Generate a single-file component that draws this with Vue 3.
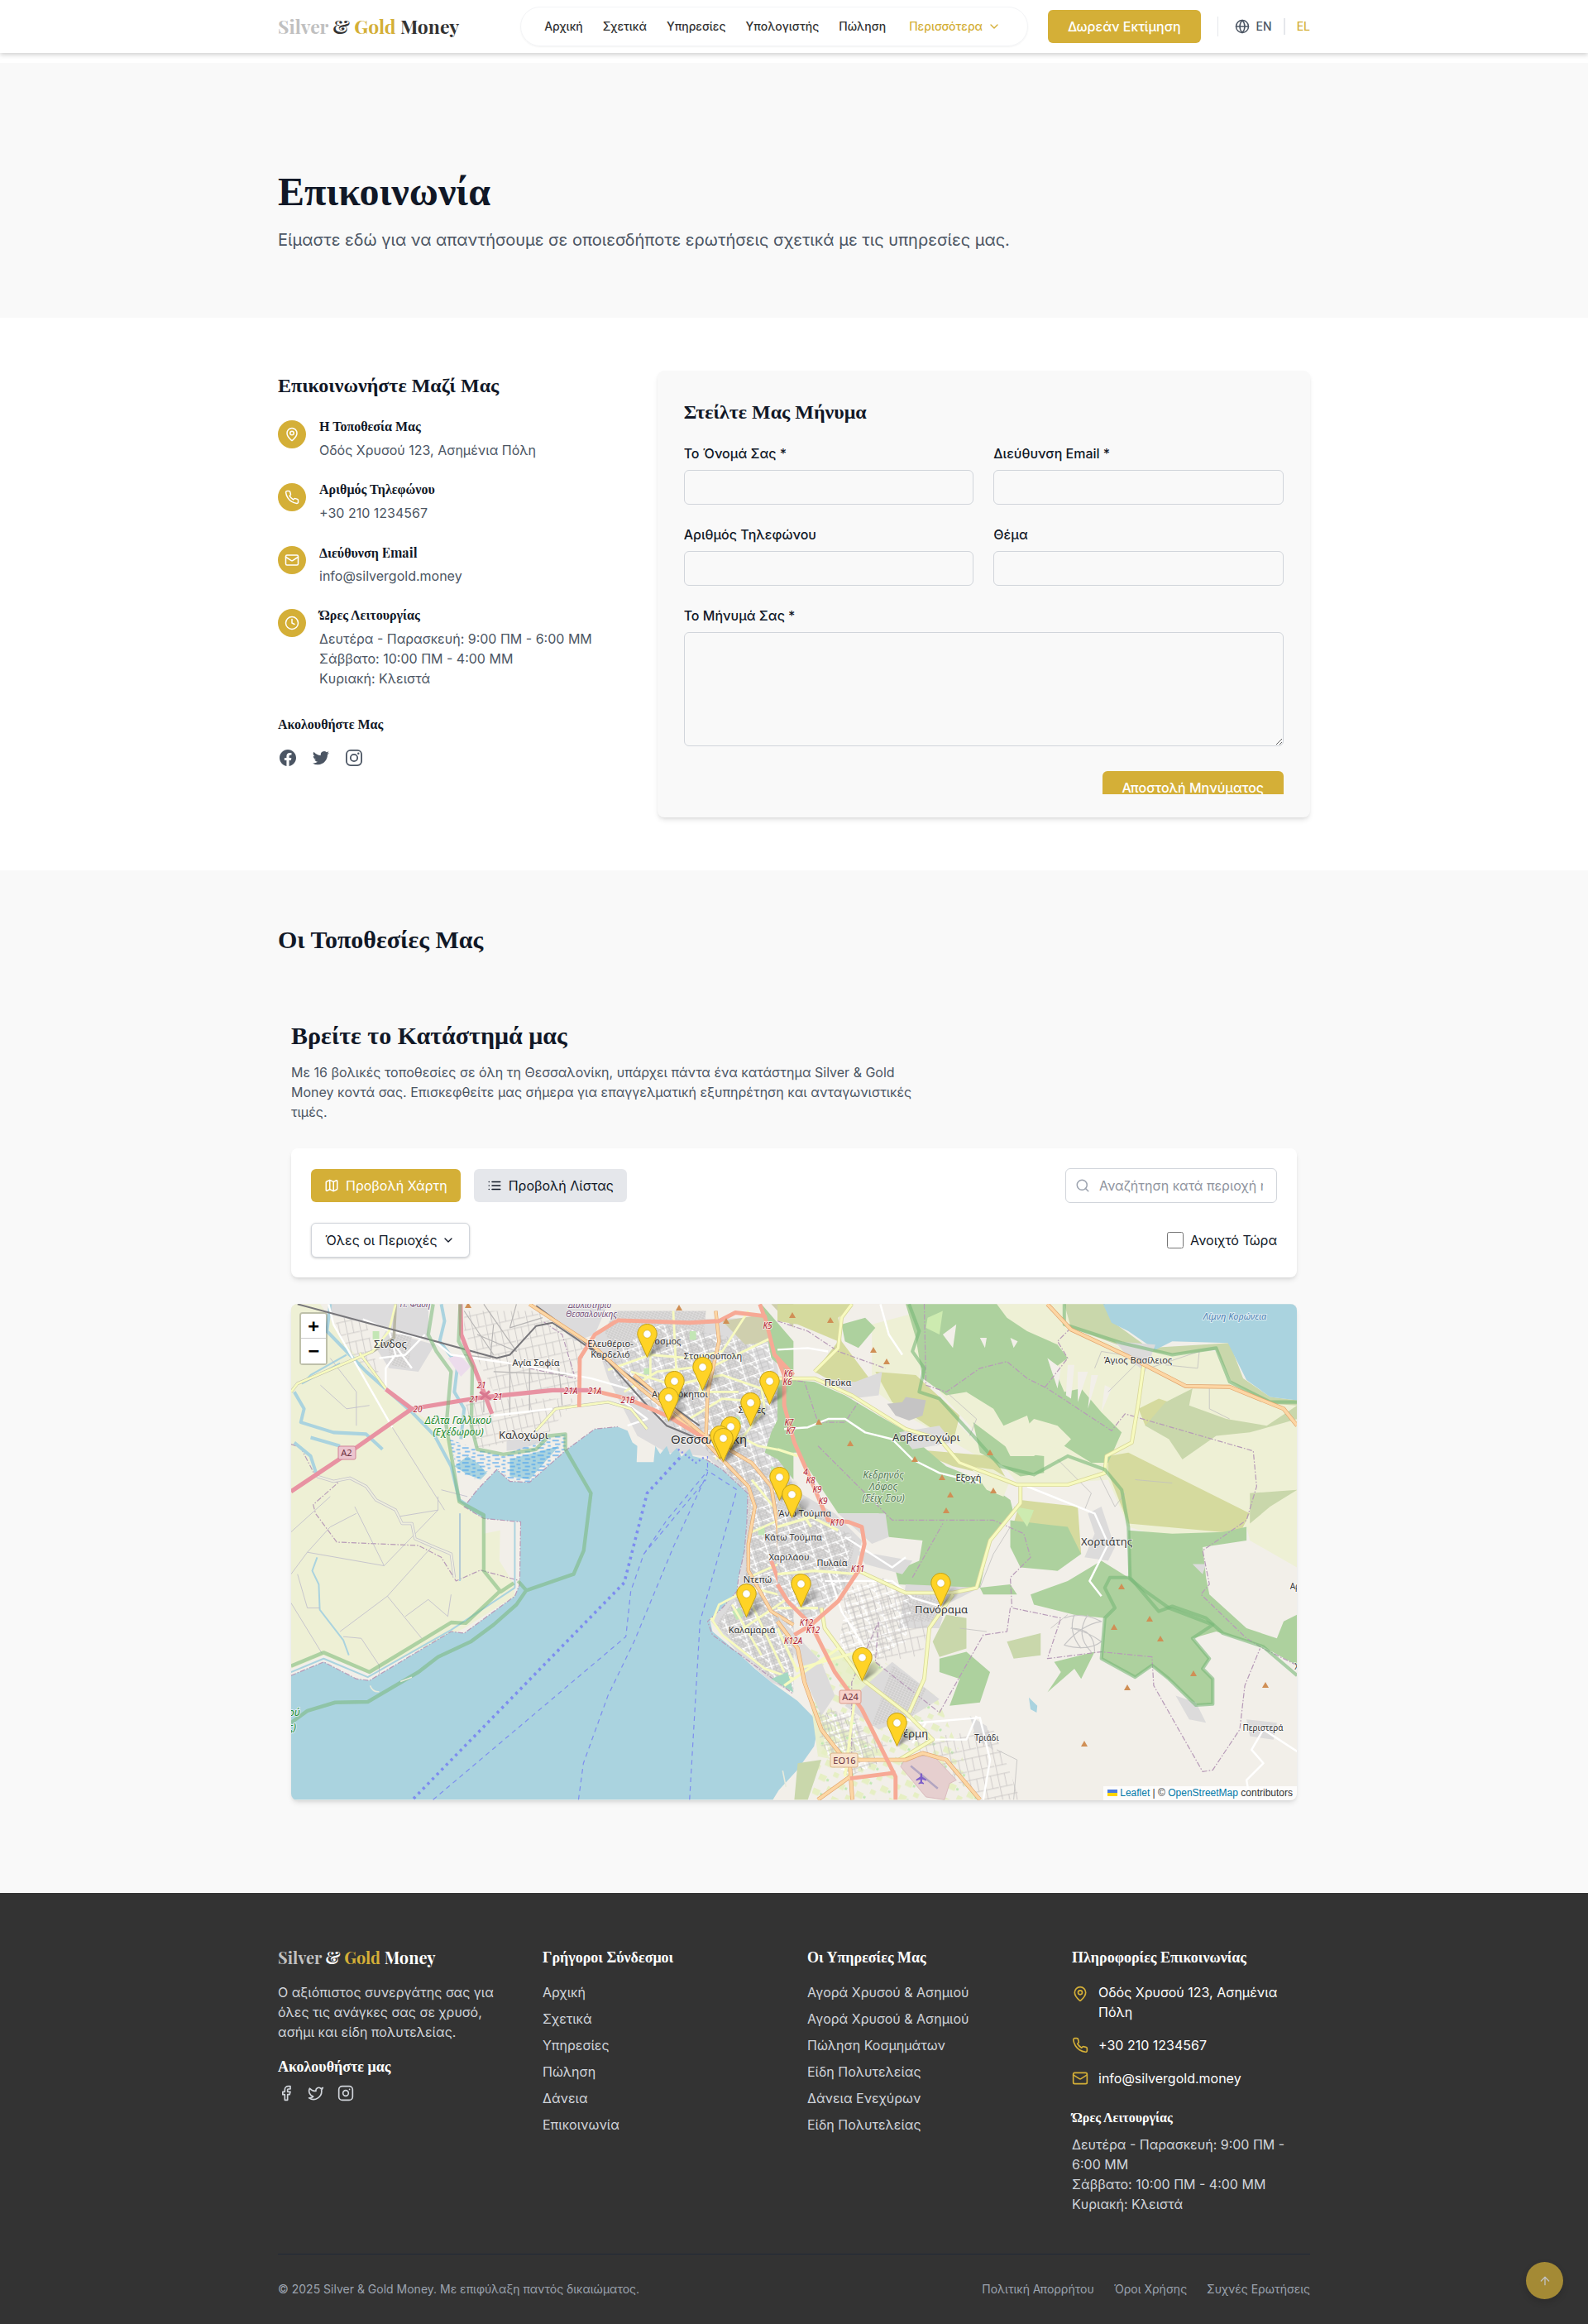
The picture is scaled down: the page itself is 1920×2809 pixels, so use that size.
<script setup>
import { h, ref } from 'vue'

const paths = {
  chevron: ['m6 9 6 6 6-6'],
  globe: ['M2 12a10 10 0 1 0 20 0a10 10 0 1 0-20 0', 'M12 2a14.5 14.5 0 0 0 0 20 14.5 14.5 0 0 0 0-20', 'M2 12h20'],
  pin: ['M20 10c0 5-5.5 10.200-7.400 11.800a1 1 0 0 1-1.200 0C9.500 20.200 4 15 4 10a8 8 0 0 1 16 0', 'M9 10a3 3 0 1 0 6 0a3 3 0 1 0-6 0'],
  phone: ['M22 16.920v3a2 2 0 0 1-2.180 2 19.790 19.790 0 0 1-8.630-3.070 19.500 19.500 0 0 1-6-6 19.790 19.790 0 0 1-3.070-8.670A2 2 0 0 1 4.110 2h3a2 2 0 0 1 2 1.720c.127.960.361 1.903.700 2.810a2 2 0 0 1-.450 2.110L8.090 9.910a16 16 0 0 0 6 6l1.270-1.270a2 2 0 0 1 2.110-.450c.907.339 1.850.573 2.810.700A2 2 0 0 1 22 16.920z'],
  mail: ['M4 4h16a2 2 0 0 1 2 2v12a2 2 0 0 1-2 2H4a2 2 0 0 1-2-2V6a2 2 0 0 1 2-2z', 'm22 7-8.970 5.700a1.940 1.940 0 0 1-2.060 0L2 7'],
  clock: ['M2 12a10 10 0 1 0 20 0a10 10 0 1 0-20 0', 'M12 6v6l4 2'],
  map: ['M14.100 5.600a2 2 0 0 0 1.800 0l3.700-1.900A1 1 0 0 1 21 4.600v12.800a1 1 0 0 1-.600.900l-4.500 2.200a2 2 0 0 1-1.800 0l-4.200-2.100a2 2 0 0 0-1.800 0l-3.700 1.900A1 1 0 0 1 3 19.400V6.600a1 1 0 0 1 .600-.900l4.500-2.200a2 2 0 0 1 1.800 0z', 'M15 5.800v15', 'M9 3.200v15'],
  list: ['M8 6h13', 'M8 12h13', 'M8 18h13', 'M3 6h.01', 'M3 12h.01', 'M3 18h.01'],
  search: ['M3 11a8 8 0 1 0 16 0a8 8 0 1 0-16 0', 'm21 21-4.300-4.300'],
  up: ['m5 12 7-7 7 7', 'M12 19V5'],
  facebook: ['M18 2h-3a5 5 0 0 0-5 5v3H7v4h3v8h4v-8h3l1-4h-4V7a1 1 0 0 1 1-1h3z'],
  twitter: ['M22 4s-.700 2.100-2 3.400c1.600 10-9.400 17.300-18 11.600 2.200.100 4.400-.600 6-2C3 15.500.500 9.600 3 5c2.200 2.600 5.600 4.100 9 4-.900-4.200 4-6.600 7-3.800 1.100 0 3-1.200 3-1.200z'],
  instagram: ['M7 2h10a5 5 0 0 1 5 5v10a5 5 0 0 1-5 5H7a5 5 0 0 1-5-5V7a5 5 0 0 1 5-5z', 'M8 12a4 4 0 1 0 8 0a4 4 0 1 0-8 0', 'M17.500 6.500h.01'],
}
const Icon = ({ name, size = 20 }) =>
  h('svg', {
    width: size, height: size, viewBox: '0 0 24 24', fill: 'none', stroke: 'currentColor',
    'stroke-width': 2, 'stroke-linecap': 'round', 'stroke-linejoin': 'round', 'aria-hidden': 'true',
  }, paths[name].map((d) => h('path', { d })))
Icon.props = ['name', 'size']

const nav = ['Αρχική', 'Σχετικά', 'Υπηρεσίες', 'Υπολογιστής', 'Πώληση']
const hours = ['Δευτέρα - Παρασκευή: 9:00 ΠΜ - 6:00 ΜΜ', 'Σάββατο: 10:00 ΠΜ - 4:00 ΜΜ', 'Κυριακή: Κλειστά']
const contacts = [
  { icon: 'pin', title: 'Η Τοποθεσία Μας', lines: ['Οδός Χρυσού 123, Ασημένια Πόλη'] },
  { icon: 'phone', title: 'Αριθμός Τηλεφώνου', lines: ['+30 210 1234567'] },
  { icon: 'mail', title: 'Διεύθυνση', latin: 'Email', lines: ['info@silvergold.money'] },
  { icon: 'clock', title: 'Ώρες Λειτουργίας', lines: hours },
]
const fields = [
  { id: 'name', label: 'Το Όνομά Σας *', type: 'text' },
  { id: 'email', label: 'Διεύθυνση Email *', type: 'email' },
  { id: 'phone', label: 'Αριθμός Τηλεφώνου', type: 'tel' },
  { id: 'subject', label: 'Θέμα', type: 'text' },
]
const quickLinks = ['Αρχική', 'Σχετικά', 'Υπηρεσίες', 'Πώληση', 'Δάνεια', 'Επικοινωνία']
const services = ['Αγορά Χρυσού & Ασημιού', 'Αγορά Χρυσού & Ασημιού', 'Πώληση Κοσμημάτων', 'Είδη Πολυτελείας', 'Δάνεια Ενεχύρων', 'Είδη Πολυτελείας']
const legal = ['Πολιτική Απορρήτου', 'Όροι Χρήσης', 'Συχνές Ερωτήσεις']
const openNow = ref(false)

/* Marker tips on the 1216 x 600 map canvas */
const markers = [
  [430, 65], [497, 105], [463, 122], [578, 122], [456, 142], [555, 148], [531, 177], [518, 188],
  [522, 191], [590, 238], [605, 259], [785, 366], [616, 367], [550, 379], [690, 456], [732, 535],
]
const places = [
  [120, 53, 13, 'Σίνδος'], [296, 75, 11, 'Αγία Σοφία'], [281, 163, 13, 'Καλοχώρι'],
  [386, 52, 11, 'Ελευθέριο-'], [386, 65, 11, 'Κορδελιό'], [449, 49, 11, 'Εύοσμος'],
  [510, 67, 11, 'Σταυρούπολη'], [470, 113, 11, 'Αμπελόκηποι'], [557, 132, 11, 'Συκιές'],
  [505, 169, 15, 'Θεσσαλονίκη'], [661, 99, 11, 'Πεύκα'], [768, 166, 13, 'Ασβεστοχώρι'],
  [819, 214, 11, 'Εξοχή'], [1024, 72, 11, 'Άγιος Βασίλειος'], [986, 292, 13, 'Χορτιάτης'],
  [621, 257, 11, 'Άνω Τούμπα'], [607, 286, 11, 'Κάτω Τούμπα'], [602, 310, 11, 'Χαριλάου'],
  [654, 317, 11, 'Πυλαία'], [564, 337, 11, 'Ντεπώ'], [557, 398, 11, 'Καλαμαριά'],
  [786, 374, 13, 'Πανόραμα'], [750, 524, 13, 'Θέρμη'], [841, 528, 10, 'Τριάδι'],
  [1175, 516, 10, 'Περιστερά'], [1230, 345, 10, 'Αρδαμέρι'], [1242, 442, 10, 'Χολομώντας'],
]
const roadRefs = [
  [230, 102, '21'], [221, 119, '21'], [250, 116, '21'], [153, 131, '20'], [338, 109, '21A'], [367, 109, '21A'],
  [407, 120, '21B'], [576, 30, 'K5'], [601, 88, 'K6'], [600, 98, 'K6'], [602, 147, 'K7'], [604, 157, 'K7'],
  [622, 207, '4'], [628, 217, 'K8'], [636, 228, 'K9'], [643, 242, 'K9'], [660, 268, 'K10'], [685, 324, 'K11'],
  [623, 389, 'K12'], [631, 398, 'K12'], [607, 411, 'K12A'],
]
const peaks = [
  [214, 2], [469, 5], [526, 21], [606, 14], [652, 20], [704, 56], [720, 70], [638, 143], [676, 169], [754, 188],
  [845, 180], [787, 210], [797, 231], [849, 226], [792, 250], [1004, 342], [1038, 381], [995, 391],
  [1051, 405], [1091, 447], [1011, 464], [1178, 461], [959, 532], [603, 146],
]
</script>

<template>
  <div class="page">
    <header class="topbar">
      <div class="container bar">
        <a class="logo" href="#"><span class="silver">Silver</span> &amp; <span class="gold">Gold</span> Money</a>
        <div class="bar-right">
          <nav class="pill">
            <a v-for="n in nav" :key="n" href="#">{{ n }}</a>
            <button type="button" class="more">Περισσότερα <Icon name="chevron" :size="16" /></button>
          </nav>
          <a class="btn primary cta" href="#">Δωρεάν Εκτίμηση</a>
          <div class="langs">
            <Icon name="globe" :size="18" />
            <button type="button">EN</button>
            <span class="sep"></span>
            <button type="button" class="gold">EL</button>
          </div>
        </div>
      </div>
    </header>

    <section class="hero">
      <div class="container">
        <h1>Επικοινωνία</h1>
        <p>Είμαστε εδώ για να απαντήσουμε σε οποιεσδήποτε ερωτήσεις σχετικά με τις υπηρεσίες μας.</p>
      </div>
    </section>

    <section class="container contact">
      <div>
        <h2>Επικοινωνήστε Μαζί Μας</h2>
        <ul class="details">
          <li v-for="c in contacts" :key="c.title">
            <span class="disc"><Icon :name="c.icon" :size="18" /></span>
            <div>
              <h3>{{ c.title }} <span v-if="c.latin" class="latin">{{ c.latin }}</span></h3>
              <p v-for="l in c.lines" :key="l">{{ l }}</p>
            </div>
          </li>
        </ul>
        <h3>Ακολουθήστε Μας</h3>
        <div class="social">
          <a href="#" aria-label="Facebook"><svg width="24" height="24" viewBox="0 0 24 24" fill="currentColor"><path d="M22 12c0-5.523-4.477-10-10-10S2 6.477 2 12c0 4.991 3.657 9.128 8.438 9.878v-6.987h-2.540V12h2.540V9.797c0-2.506 1.492-3.890 3.777-3.890 1.094 0 2.238.195 2.238.195v2.460h-1.260c-1.243 0-1.630.771-1.630 1.562V12h2.773l-.443 2.890h-2.330v6.988C18.343 21.128 22 16.991 22 12z" /></svg></a>
          <a href="#" aria-label="Twitter"><svg width="24" height="24" viewBox="0 0 24 24" fill="currentColor"><path d="M8.290 20.251c7.547 0 11.675-6.253 11.675-11.675 0-.178 0-.355-.012-.530A8.348 8.348 0 0022 5.920a8.190 8.190 0 01-2.357.646 4.118 4.118 0 001.804-2.270 8.224 8.224 0 01-2.605.996 4.107 4.107 0 00-6.993 3.743 11.650 11.650 0 01-8.457-4.287 4.106 4.106 0 001.270 5.477A4.072 4.072 0 012.800 9.713v.052a4.105 4.105 0 003.292 4.022 4.095 4.095 0 01-1.853.070 4.108 4.108 0 003.834 2.850A8.233 8.233 0 012 18.407a11.616 11.616 0 006.290 1.840" /></svg></a>
          <a href="#" aria-label="Instagram"><svg width="24" height="24" viewBox="0 0 24 24" fill="none" stroke="currentColor" stroke-width="1.800"><rect x="2.900" y="2.900" width="18.200" height="18.200" rx="5" /><circle cx="12" cy="12" r="4.200" /><circle cx="17.300" cy="6.700" r="1.200" fill="currentColor" stroke="none" /></svg></a>
        </div>
      </div>

      <div class="card">
        <form class="form" @submit.prevent>
          <h2>Στείλτε Μας Μήνυμα</h2>
          <div class="fields">
            <div v-for="f in fields" :key="f.id" class="field">
              <label :for="f.id">{{ f.label }}</label>
              <input :id="f.id" :type="f.type">
            </div>
            <div class="field wide">
              <label for="message">Το Μήνυμά Σας *</label>
              <textarea id="message"></textarea>
            </div>
          </div>
          <div class="submit"><button class="btn primary" type="submit">Αποστολή Μηνύματος</button></div>
        </form>
      </div>
    </section>

    <section class="locations">
      <div class="container">
        <h2 class="big">Οι Τοποθεσίες Μας</h2>
        <div class="finder">
          <h2 class="big">Βρείτε το Κατάστημά μας</h2>
          <p class="lead">Με 16 βολικές τοποθεσίες σε όλη τη Θεσσαλονίκη, υπάρχει πάντα ένα κατάστημα Silver &amp; Gold Money κοντά σας. Επισκεφθείτε μας σήμερα για επαγγελματική εξυπηρέτηση και ανταγωνιστικές τιμές.</p>

          <div class="panel">
            <div class="row">
              <div class="views">
                <button type="button" class="view active"><Icon name="map" :size="18" />Προβολή Χάρτη</button>
                <button type="button" class="view"><Icon name="list" :size="18" />Προβολή Λίστας</button>
              </div>
              <div class="search">
                <Icon name="search" :size="18" />
                <input type="text" aria-label="Αναζήτηση" placeholder="Αναζήτηση κατά περιοχή ή διεύθυνση...">
              </div>
            </div>
            <div class="row">
              <div class="region">
                <select aria-label="Περιοχή"><option>Όλες οι Περιοχές</option></select>
                <Icon name="chevron" :size="16" />
              </div>
              <label class="open"><input v-model="openNow" type="checkbox">Ανοιχτό Τώρα</label>
            </div>
          </div>

          <div class="map">
            <svg class="tiles" viewBox="0 0 1216 600" preserveAspectRatio="xMidYMid slice" aria-label="Χάρτης Θεσσαλονίκης">
              <defs>
                <pattern id="streets" width="9" height="7" patternUnits="userSpaceOnUse" patternTransform="rotate(24)">
                  <rect width="9" height="7" fill="#cfcecd" />
                  <path d="M0 0H9M0 0V7" stroke="#e9e8e8" stroke-width="2" />
                </pattern>
                <pattern id="streets2" width="47" height="38" patternUnits="userSpaceOnUse" patternTransform="rotate(-18)">
                  <path d="M0 1H47M2 0V38M28 1L47 26" fill="none" stroke="#fff" stroke-width="4" />
                  <path d="M0 12H47M14 0V38M0 26H30M34 10V38" fill="none" stroke="#bfbebd" stroke-width="2" />
                </pattern>
                <pattern id="lanes" width="42" height="64" patternUnits="userSpaceOnUse" patternTransform="rotate(-12)">
                  <path d="M0 2H42M4 0V64M24 2V40M4 40H42" fill="none" stroke="#c6c3c2" stroke-width="2" />
                </pattern>
                <pattern id="fields" width="60" height="46" patternUnits="userSpaceOnUse" patternTransform="rotate(25)">
                  <path d="M0 0h22v18H0zM36 24h16v14H36z" fill="#e6efc4" />
                  <path d="M24 6h7v7h-7z" fill="#bfe8b0" />
                </pattern>
                <pattern id="marsh" width="46" height="22" patternUnits="userSpaceOnUse">
                  <path d="M2 4h20M30 9h12M10 15h16M34 20h9" stroke="#4aa3ef" stroke-width="3" />
                </pattern>
              </defs>
              <rect width="1216" height="600" fill="#f2efe9" />

              <g transform="translate(-12 -16) scale(.395 .408)" fill="none" stroke-linejoin="round">
                <path fill="#eef0d5" d="M30 40H120L200 160L330 300L400 350L470 400L515 430L530 560L560 640L620 675L620 720L670 710L668 800L700 850L712 870L715 905L560 1000L270 1135L130 1080L30 1120z" />
                <path fill="url(#lanes)" d="M560 60H880L930 160L910 290L650 300L560 120zM560 320L900 320L820 420L600 470zM150 50L260 90L300 250L200 190z" />
                <path fill="#dcdbdc" d="M145 40H450L452 150L350 120L150 70zM320 120L470 160L420 240L330 230L290 170zM690 445L800 430L790 465L690 475zM780 40H1000L960 130L900 150L830 90zM960 140L1010 90L1470 80L1520 230L1540 420L1568 600L1568 1190L1500 1160L1400 1075L1315 980L1400 880L1425 690L1428 600L1300 490L1180 480L1090 430L1000 260z" />
                <path fill="url(#streets)" d="M990 120L1020 60L1300 60L1290 180L1150 200L1020 190zM1180 130L1420 150L1500 320L1450 420L1340 420L1240 330L1180 240zM1310 480L1420 440L1568 640V1180L1500 1150L1330 990L1420 870L1430 600zM330 130L400 130L390 230L330 220z" />
                <path fill="url(#streets2)" d="M980 200L1160 100L1500 160L1530 430L1568 600V1180L1480 1130L1340 990L1420 870L1440 610L1280 450L1080 330z" />
                <path fill="#add19e" d="M1470 40L1568 150V260L1500 200zM1540 250L1568 300V560L1520 500L1480 480L1500 420L1530 360z" />
                <path fill="#cfcfae" d="M1350 90L1480 70L1500 150L1420 160zM1500 40H1568V110z" />
                <path fill="#c3e6b5" d="M1370 380l30 -8 10 24 -28 8zM1200 300l26 4 -6 22 -24 -6zM1110 230l20 0 0 18 -20 0zM1250 120l20 0 0 26 -20 0zM1500 520l30 10 -6 24 -28 -10zM1460 700l20 0 0 24 -20 0zM1380 950l24 -12 12 26 -22 12zM280 120l20 0 0 24 -20 0z" />
                <path fill="#aad3df" d="M30 1140L130 1100L230 1150L270 1155L520 1010L560 1015L715 905L730 870L733 685L620 675L560 640L600 590L660 530L700 565L760 568L875 470L960 410L1030 403L1060 415L1075 450L1090 460L1088 508L1140 508L1145 460L1160 484L1180 460L1190 486L1212 465L1225 492L1250 468L1260 490L1300 500L1350 530L1400 575L1428 600L1425 690L1418 770L1400 850L1395 890L1350 940L1312 975L1320 1010L1400 1075L1450 1120L1500 1160L1580 1215L1646 1280L1631 1350L1580 1420L1523 1480L1505 1508H30z" />
                <path stroke="#b79bb8" stroke-width="3" stroke-dasharray="16 5 4 5" d="M30 1140L130 1100L230 1150L270 1155L520 1010L560 1015L715 905L730 870L733 685L620 675L560 640L600 590L660 530L700 565L760 568L875 470L960 410L1030 403M1300 500L1350 530L1428 600L1425 690L1418 770L1400 850L1395 890L1350 940L1305 980L1320 1020L1400 1075L1568 1195M30 455L60 465L105 550L175 568L98 634L105 660L170 745L420 755L490 790L535 860L610 828L725 858M760 230L900 260L860 130L800 90" />
                <path fill="#f2efe9" d="M515 440L530 530L560 500L600 500L640 540L670 480L600 470L580 440zM670 490L870 425V470L760 565L700 560L650 520z" />
                <path fill="#aad3df" d="M530 520L570 490L600 510L630 540L610 560L570 545zM700 500L850 460L760 560L700 550z" />
                <path fill="url(#marsh)" d="M515 440L600 470L680 488L830 430L875 425V470L760 568L700 560L650 520L600 560L540 540z" />
                <g stroke="#aad3df">
                  <path stroke-width="10" d="M150 40L140 120L260 240L400 360L470 430L520 520L545 620L600 655M490 40L500 90L485 150L540 220L530 300L560 350L550 440M40 300L70 350L60 390L160 420L260 425L310 470M90 435L180 460M40 450L90 490L110 550" />
                  <path stroke-width="5" d="M200 190L90 250L65 275L180 215M110 790L95 830L115 870L118 945L190 1035L207 1080M715 685V880L520 1005L265 1145L130 1090L30 1130M547 660V860" />
                </g>
                <path fill="#ecdcec" d="M510 200L545 190L580 225L550 255z" />
                <g stroke="#bdbacb" stroke-width="2">
                  <path d="M30 715L150 610M30 840L80 775L150 700L230 660M80 775L315 815L225 640M315 815L480 650L355 670M380 965L450 915L510 965L520 900M180 1010L325 905L460 760M80 940L50 840M80 940H118M30 925L125 1075M190 1025L245 1030L300 1110V1135M325 905L430 1030M547 660V855M340 405L500 650M480 610V650M490 590L570 610M150 200L230 300L230 400M120 280L200 350L270 340" />
                  <path stroke="#b7b5b4" stroke-width="3" d="M560 60L650 190M620 40L720 180L600 130M720 40L700 110L800 80M650 100L640 200L560 190M760 210V360M700 210V370M650 240L900 250M620 300V360M850 230L860 340" />
                </g>
                <path stroke="#c5c4ca" stroke-width="9" d="M110 550L160 565L210 555L260 580L290 620L350 650L370 690L400 690L410 735L470 760L520 780L530 850" />
                <path stroke="#eeeedd" stroke-width="5" d="M110 550L160 565L210 555L260 580L290 620L350 650L370 690L400 690L410 735L470 760L520 780L530 850" />
                <g stroke="#fff" stroke-width="6">
                  <path d="M145 40L160 100L340 405M330 120L350 190L320 230L320 300M250 85L340 120L470 150M470 150L520 190L700 215L950 260L1060 290M650 370L830 350M300 200L380 190L440 130M1050 330L1120 380L1060 400M350 165L400 230" />
                </g>
                <g stroke="#b9b7a6" stroke-width="9"><path d="M30 300L50 275L280 180L345 140L350 40M240 185L320 290M780 415L840 350L1000 330L1070 350L1120 410" /></g>
                <g stroke="#f7fabf" stroke-width="7">
                  <path d="M30 300L50 275L280 180L330 120L350 40M240 185L320 290M780 415L840 350L1000 330L1070 350L1120 410M1000 235L1130 190L1250 200L1350 180L1430 60M1070 240L1200 280L1350 250L1470 290L1480 350L1400 450M1130 100V250M1200 60L1210 250M1050 300L1150 240L1330 220L1500 140M1250 380L1350 320L1470 330M1330 500L1400 430L1460 460L1568 480M1440 560L1540 680L1568 760M1430 720L1568 660M1430 850L1568 790M1320 980L1340 930L1440 880L1520 900L1568 880M1315 970L1350 1020L1480 1120L1568 1150M1380 930L1470 1080M1430 910L1540 1130M1400 1010L1568 900M1300 200L1280 300L1400 300" />
                </g>
                <g stroke="#77767a" stroke-width="5"><path d="M50 40L340 115L660 200L700 190L780 105L830 95L900 140L1000 210L1120 340L1180 400L1280 440M780 45L900 130L1010 215L1150 310L1280 400" /></g>
                <g stroke="#e0a26a" stroke-width="11"><path d="M760 40L950 160L1100 290L1280 430L1430 580L1450 640L1430 750L1430 830L1500 950L1568 990M1080 250L1290 425L1440 510L1500 580L1520 700L1530 850M1330 60L1340 150L1305 300L1300 440" /></g>
                <g stroke="#fcd6a4" stroke-width="8"><path d="M760 40L950 160L1100 290L1280 430L1430 580L1450 640L1430 750L1430 830L1500 950L1568 990M1080 250L1290 425L1440 510L1500 580L1520 700L1530 850M1330 60L1340 150L1305 300L1300 440" /></g>
                <g stroke="#f7a995" stroke-width="12"><path d="M950 295L1060 320L1180 370L1300 440M912 345L914 200L960 130L1030 88L1250 95L1340 90L1390 65L1480 75L1510 190L1568 250M1465 40L1480 80M1500 800L1530 880L1600 940" /></g>
                <g stroke="#e892a2" stroke-width="13"><path d="M30 595L200 485L400 350L600 318L830 295L950 295M549 40L551 130L620 300L645 365M320 292L400 350" /></g>
                <path stroke="#d87890" stroke-width="8" d="M608 300L642 322M610 322L638 298" />
                <g stroke="#78b878" stroke-opacity=".55" stroke-width="11">
                  <path d="M465 40L450 130L475 180L520 240L505 400L545 625L620 665V830L672 892L712 866M548 40L543 150L585 225L582 400L600 470L680 485L780 470L820 430L870 425V470L948 600L926 770L895 840L750 888L725 860M30 1112L130 1072L270 1130L520 983L565 985L670 890M750 888L720 930L650 990L580 1040L480 1085L420 1130L265 1218L165 1220L80 1245L30 1280" />
                </g>
                <g stroke="#7680f2" stroke-opacity=".85" stroke-width="3" stroke-dasharray="14 12">
                  <path d="M465 1508L1055 1025L1070 890L1110 780L1300 560M910 1508L925 1400L1000 1200L1080 1040L1200 760L1305 540V490M1250 1508L1282 980L1395 590L1300 530M1110 780L1180 680L1300 540" />
                  <path stroke-width="9" stroke-dasharray="8 12" d="M405 1505L1050 865L1120 600L1225 490" />
                  <path stroke-width="6" stroke-dasharray="5 8" d="M1215 470L1270 510L1300 490" />
                </g>
                <path stroke="#e8eadb" stroke-width="4" d="M272 1170Q280 1190 300 1188M365 1158L400 1145M1535 1422L1545 1470" />
                <path fill="#a5d8c3" d="M1500 1150L1550 1130L1568 1190z" />
              </g>

              <g transform="translate(588 -16) scale(.408)" fill="none" stroke-linejoin="round">
                <path fill="#eef0d5" d="M640 40H850L870 110L1020 170L1300 180L1345 270L1540 340V820L1400 740L1390 700L1250 760L1040 700L980 560L720 580L570 400L480 300L640 200zM280 100L430 60L420 280L560 420L680 540L400 380L280 290z" />
                <path fill="#e9efcd" d="M130 1060L280 1090L400 1200L330 1300L200 1180zM100 1230L200 1300L320 1370L220 1400L120 1380z" />
                <path fill="url(#fields)" d="M40 1040L300 1090L470 1200L600 1508H100L130 1300z" />
                <path fill="#d5da9e" d="M0 40H225L180 80L190 150L280 270L200 290L110 240L180 150L60 100L0 90zM290 240L410 250L540 370L520 450L340 330zM980 490L1040 480L1200 560L1400 660L1370 720L1040 690L980 540zM720 620L890 640L900 780L780 760L700 690zM1070 350L1130 320L1190 340L1150 400L1090 400zM400 470L640 490L680 560L520 520z" />
                <path fill="#c9d7ab" d="M850 40H970L990 90L1100 170L1340 155L1380 260L1460 315L1540 325V340L1460 335L1345 270L1300 175L1170 190L1020 165L870 110zM1150 330L1230 290L1220 340L1330 380L1450 400L1540 340V380L1400 420L1300 430L1200 500L1160 440L1090 400zM1400 600L1540 590L1460 640L1400 690zM680 1040L780 1015V1080L700 1090zM460 1040L500 960L560 970L560 1060L480 1085zM60 1400L130 1390L90 1508H50z" />
                <g fill="#add19e">
                  <path d="M380 40H650L680 80L740 120L830 160L860 200L820 230L850 300L900 290L960 360L1000 400L1020 420L980 510L930 510L850 460L760 440L740 370L670 400L640 350L560 300L500 310L430 260L410 140zM0 260L110 270L200 310L300 370L370 410L500 520L620 570L690 620L700 660L630 740L600 880L520 880L360 870L350 830L420 800L430 740L330 730L300 660L180 660L140 600L60 480L0 480zM580 390L700 480L790 490L790 540L720 550L600 480zM190 100L260 80L290 110L240 170L200 150z" />
                  <path d="M690 680L860 700L900 780L830 830L720 820L690 760zM750 900L860 860L960 800L1040 850V710L1170 720L1320 715L1390 700V740L1260 760L1270 850L1280 900L1390 1000L1480 1030L1500 980L1540 960V1110L1430 1050L1300 1010L1230 1030L1280 1090L1260 1120L1290 1150L1290 1225L1240 1228L1170 1160L1110 1110L1060 1145L960 1090L970 970L880 960L760 930zM480 1090L560 1070L630 1130L600 1220L510 1230L540 1150L480 1130zM600 880L690 870L710 900L610 900zM820 1100L940 1070L900 1150L880 1120L800 1190L840 1130z" />
                </g>
                <path fill="#f2efe9" d="M800 200L840 230L830 290zM860 220L880 220L870 320L855 310zM890 240L920 240L890 330zM930 250L950 250L920 350zM970 280L990 290L960 360zM490 130L530 100L520 170zM600 140L620 140L615 170zM690 140L712 150L700 170z" />
                <path fill="#eef0d5" d="M660 430L690 400L730 410L760 380L830 400L870 440L840 470L800 460L760 490L690 490zM570 520L640 530L690 560L670 610L620 590z" />
                <path fill="#cdebb0" d="M445 80L490 60L480 130L440 110zM700 640L760 650L740 700z" />
                <path fill="#aad3df" d="M965 40H1540V325L1460 315L1390 265L1335 155L1170 150L1120 175L1040 120L990 95zM745 1205L770 1230L768 1250L750 1240z" />
                <path fill="#dcdbdb" d="M130 260L230 270L310 240L300 310L220 320zM360 420L480 400L520 450L400 470zM920 660L960 640L1000 760L980 800L910 790L940 720zM180 660L320 660L330 730L280 750zM230 770L400 800L370 840L260 810zM380 870L600 880L500 930L480 1000L360 1000zM340 1100L480 1210L400 1260L300 1300L200 1230L250 1180zM570 1260L620 1290L640 1360L590 1330zM1390 1270L1480 1280L1470 1330L1400 1320zM1180 1200L1240 1220L1270 1280L1220 1270zM1000 150L1120 160L1090 240L1050 210zM1230 810L1270 810L1260 840zM0 560L170 660L250 740L220 860L100 980L0 900zM0 960L130 1100L170 1200L130 1260L60 1100z" />
                <path fill="#c5c4c4" d="M325 335L370 330L380 315L440 325L430 370L390 385L350 370z" />
                <path fill="url(#streets)" d="M0 590L160 690L140 730L60 900L0 870zM150 700L230 740L210 850L110 850L100 760zM340 1110L440 1180L400 1260L280 1290zM380 900L480 910L460 980L390 980z" />
                <path fill="url(#streets2)" d="M0 650L220 720L200 880L100 980L0 900zM210 880L320 850L400 920L380 1040L290 1090L180 1060zM120 1250L230 1250L300 1400L210 1440L150 1380z" />
                <path fill="url(#lanes)" d="M170 900L460 900L430 1080L300 1100zM150 1230L330 1350L210 1420L120 1340zM380 1330L640 1300L720 1508H600z" />
                <path stroke="#c6c5c5" stroke-width="3" d="M850 970Q900 950 960 980Q900 990 850 1050Q920 1070 960 1040Q920 1010 870 1000Q940 1000 940 1070M880 960Q860 1010 900 1060M920 960Q880 1020 930 1070" />
                <path fill="#e6cfcf" stroke="#d6b3b8" stroke-width="2" d="M380 1385L460 1375L530 1450L510 1460L495 1508L440 1500L365 1410z" />
                <path stroke="#9b93bb" stroke-width="6" stroke-opacity=".7" d="M395 1408L475 1475" />
                <g stroke="#b79bb8" stroke-width="3" stroke-dasharray="16 5 4 5">
                  <path d="M435 40L440 280L500 300L600 230L680 210L740 260L800 290L990 415L1030 365L1410 475L1420 580L1390 680L1260 770L1280 870L1255 900L1390 1030L1440 1060L1540 1110M870 110L830 150L860 200L790 290M0 90L90 120L180 180L320 230M0 260L80 270L120 390L200 390L240 330M120 460L340 680L640 680L730 720L750 790L690 850L695 940L840 970L800 1090L960 1070L1110 1085L1115 1170L1260 1425L1290 1420L1370 1300L1385 1170L1430 1060M400 850L490 690M690 940L680 1010L610 1020L480 1250L290 1100L300 980L220 1160V1500" />
                </g>
                <g stroke="#c2c0bf" stroke-width="2"><path d="M940 230L960 180L1080 200L980 300M1100 230L1250 180L1245 230L1150 220M1280 290V350L1340 380M500 300L590 380L570 430M810 1000L860 960M650 1360L710 1390L700 1508M600 880L640 780L690 700M950 540L1000 640L1030 600M1060 560L1170 570M830 500L930 600L910 650M540 1000L620 1010" /></g>
                <g stroke="#fff" stroke-width="6">
                  <path d="M305 40L330 130L370 190M0 175L90 170L150 180M20 410L90 405L150 380L200 380L260 420L340 440L400 500L480 540L600 570M740 580L940 660L980 750L925 860L960 905M140 860L340 860L400 910L500 940M340 1260L420 1280L600 1265L630 1390L610 1508M440 1280L400 1340M1540 1365L1440 1300L1405 1360L1440 1400L1390 1450L1400 1508M590 1260L560 1330L460 1330M150 830L190 950L260 1060M200 730L340 820L380 790" />
                </g>
                <g stroke="#d8d79a" stroke-width="12"><path d="M0 260H110L220 310L380 410L480 440L540 510L710 575L860 575L970 540L975 490L1050 450L1070 330L1085 220M110 240L180 170L190 80L220 40M720 580L720 630L630 740L590 880L520 895L380 895L240 830M520 900L450 1000L435 1150L390 1250M130 940L140 1000L250 1150L380 1250L460 1330L360 1390" /></g>
                <g stroke="#f7fabf" stroke-width="8">
                  <path d="M0 260H110L220 310L380 410L480 440L540 510L710 575L860 575L970 540L975 490L1050 450L1070 330L1085 220M110 240L180 170L190 80L220 40M720 580L720 630L630 740L590 880L520 895L380 895L240 830M520 900L450 1000L435 1150L390 1250M130 940L140 1000L250 1150L380 1250L460 1330L360 1390M0 700L100 670L180 710M0 840L110 830L240 840M0 940L120 940M60 1120L240 1070M0 1000L60 1130M20 1170L180 1060M30 590L100 700M0 470L60 490M200 1440L230 1200" />
                </g>
                <g stroke="#78b878" stroke-opacity=".6" stroke-width="10">
                  <path d="M390 40L420 120L400 180L435 230L420 300L480 320L580 430L660 520L760 545L860 490L970 530L1020 590L1040 700L1045 850L1130 950L1170 935L1270 970L1320 1015L1440 1055L1540 1140M850 40V100L1020 155L1170 190L1300 170L1340 270L1460 330L1540 330" />
                  <path d="M985 850L1040 850L1090 890L1160 940L1290 990L1230 1030L1280 1090L1260 1120L1290 1150L1290 1225L1240 1228L1160 1150L1110 1110L1060 1145L960 1090L970 970L1000 940L970 880z" />
                </g>
                <g stroke="#e0a26a" stroke-width="12"><path d="M800 40L870 115L1040 195L1210 283L1340 285L1500 350L1540 400M0 980L60 1060L80 1160L130 1300L215 1410L222 1508M215 1390H380L430 1370L500 1390L600 1508M215 1440L120 1508" /></g>
                <g stroke="#fcd6a4" stroke-width="9"><path d="M800 40L870 115L1040 195L1210 283L1340 285L1500 350L1540 400M0 980L60 1060L80 1160L130 1300L215 1410L222 1508M215 1390H380L430 1370L500 1390L600 1508M215 1440L120 1508" /></g>
                <g stroke="#f7a995" stroke-width="12"><path d="M0 200L20 250V340L50 450L90 540L150 680L210 685L250 700L258 750L240 830L180 920L100 990L50 1020M0 870L30 920L100 990L170 1130L250 1240L320 1380L350 1440V1508M215 1445L350 1428" /></g>
                <path fill="#7d5fc9" d="M424 1430h5v10l12 8v4l-12-4v7l5 4v3l-8-2-8 2v-3l5-4v-7l-12 4v-4l12-8z" />
              </g>

              <path v-for="(p, i) in peaks" :key="'p' + i" :d="`M${p[0] - 4} ${p[1] + 3}l4-7 4 7z`" fill="#d08f55" />
              <g class="places">
                <text v-for="(p, i) in places" :key="'t' + i" :x="p[0]" :y="p[1]" :font-size="p[2]">{{ p[3] }}</text>
              </g>
              <g class="refs">
                <text v-for="(r, i) in roadRefs" :key="'r' + i" :x="r[0]" :y="r[1]">{{ r[2] }}</text>
              </g>
              <g class="nature">
                <text x="202" y="145">Δέλτα Γαλλικού</text><text x="202" y="159">(Εχέδωρου)</text>
                <text x="-18" y="498">Θερμαϊκού</text><text x="-14" y="516">Αλυκές)</text>
              </g>
              <g class="hill">
                <text x="716" y="211">Κεδρηνός</text><text x="716" y="225">Λόφος</text><text x="716" y="239">(Σέιχ Σου)</text>
              </g>
              <g class="station"><text x="361" y="5">Διυλιστήριο</text><text x="363" y="16">Θεσσαλονίκης</text><text x="150" y="4">Π. Φάση</text></g>
              <text class="lake" x="1141" y="19">Λίμνη Κορώνεια</text>
              <g class="shields">
                <rect x="57" y="172" width="21" height="16" rx="2" fill="#ecc5cf" stroke="#d18398" /><text x="67" y="184">A2</text>
                <rect x="663" y="467" width="26" height="16" rx="2" fill="#f7d3cb" stroke="#dc9a8a" /><text x="676" y="479">A24</text>
                <rect x="652" y="543" width="33" height="17" rx="2" fill="#f8e3cc" stroke="#dcb688" /><text x="669" y="556">EO16</text>
              </g>
            </svg>

            <button v-for="(m, i) in markers" :key="i" type="button" class="marker" :aria-label="`Κατάστημα ${i + 1}`" :style="{ left: m[0] / 12.16 + '%', top: m[1] / 6 + '%' }">
              <svg width="42" height="42" viewBox="0 0 42 42">
                <defs>
                  <linearGradient :id="'sh' + i" x1="0" y1="1" x2="1" y2="0"><stop offset="0" stop-opacity=".5" /><stop offset="1" stop-opacity="0" /></linearGradient>
                </defs>
                <path class="shade" d="M13 41L22 20Q30 14 34 20Q35 26 27 32z" :fill="`url(#sh${i})`" />
                <path d="M12.500.500C6 .500.800 5.700.800 12.200c0 2.600 1 5 2.200 7.200L12.500 40.500L22 19.400c1.200-2.200 2.200-4.600 2.200-7.200C24.200 5.700 19 .500 12.500.500z" fill="#ffd326" stroke="#c2a015" />
                <circle cx="12.500" cy="12.500" r="4.700" fill="#fff" stroke="#c2a015" stroke-opacity=".5" />
              </svg>
            </button>

            <div class="zoomer"><button type="button" aria-label="Μεγέθυνση">+</button><button type="button" aria-label="Σμίκρυνση">−</button></div>
            <div class="credit">
              <a href="#"><svg width="12" height="8" viewBox="0 0 12 8"><path fill="#4C7BE1" d="M0 0h12v4H0z" /><path fill="#FFD500" d="M0 4h12v4H0z" /></svg> Leaflet</a> | © <a href="#">OpenStreetMap</a> contributors
            </div>
          </div>
        </div>
      </div>
    </section>

    <footer>
      <div class="container">
        <div class="cols">
          <div>
            <a class="logo small" href="#"><span class="silver">Silver</span> &amp; <span class="gold">Gold</span> Money</a>
            <p>Ο αξιόπιστος συνεργάτης σας για όλες τις ανάγκες σας σε χρυσό, ασήμι και είδη πολυτελείας.</p>
            <h4 class="follow">Ακολουθήστε μας</h4>
            <div class="social">
              <a v-for="s in ['facebook', 'twitter', 'instagram']" :key="s" href="#" :aria-label="s"><Icon :name="s" :size="20" /></a>
            </div>
          </div>
          <div>
            <h4>Γρήγοροι Σύνδεσμοι</h4>
            <ul class="links"><li v-for="q in quickLinks" :key="q"><a href="#">{{ q }}</a></li></ul>
          </div>
          <div>
            <h4>Οι Υπηρεσίες Μας</h4>
            <ul class="links"><li v-for="(s, i) in services" :key="i"><a href="#">{{ s }}</a></li></ul>
          </div>
          <div>
            <h4>Πληροφορίες Επικοινωνίας</h4>
            <ul class="reach">
              <li class="address"><Icon name="pin" :size="20" />Οδός Χρυσού 123, Ασημένια Πόλη</li>
              <li><Icon name="phone" :size="20" />+30 210 1234567</li>
              <li><Icon name="mail" :size="20" />info@silvergold.money</li>
            </ul>
            <h5>Ώρες Λειτουργίας</h5>
            <p v-for="l in hours" :key="l">{{ l }}</p>
          </div>
        </div>
        <div class="legal">
          <span>© 2025 Silver &amp; Gold Money. Με επιφύλαξη παντός δικαιώματος.</span>
          <nav><a v-for="l in legal" :key="l" href="#">{{ l }}</a></nav>
        </div>
      </div>
    </footer>

    <button type="button" class="to-top" aria-label="Επιστροφή στην κορυφή"><Icon name="up" :size="16" /></button>
  </div>
</template>

<style>
body { margin: 0; }
</style>

<style scoped>
.page { font: 16px/24px Inter, "Noto Sans", sans-serif; color: #111827; background: #fff; }
.page *, .page *::before { box-sizing: border-box; }
h1, h2, h3, h4, h5, p, ul { margin: 0; padding: 0; }
ul { list-style: none; }
h1, h2, h3, h4, h5 { font-family: "Liberation Serif", serif; font-weight: 700; }
.logo, .latin { font-family: "Playfair Display", "Liberation Serif", serif; font-weight: 700; }
a { color: inherit; text-decoration: none; }
button, input, textarea, select { font: inherit; color: inherit; margin: 0; }
button { border: 0; background: none; padding: 0; cursor: pointer; }
svg { display: block; flex: none; }
.container { max-width: 1280px; margin: 0 auto; padding: 0 16px; }
.gold { color: #d4af37; }
.silver { color: #c0c0c0; }

.topbar { position: relative; background: #fff; box-shadow: 0 2px 6px rgba(0, 0, 0, .2); }
.bar { display: flex; align-items: center; justify-content: space-between; height: 64px; }
.logo { font-size: 23px; line-height: 32px; color: #333; }
.logo.small { display: block; font-size: 20px; line-height: 28px; color: #fff; margin-bottom: 16px; }
.bar-right { display: flex; align-items: center; }
.pill { display: flex; align-items: center; gap: 24px; height: 48px; padding: 0 28px; border: 1px solid #f3f4f6; border-radius: 24px; box-shadow: 0 1px 2px rgba(0, 0, 0, .05); font-size: 14px; font-weight: 500; color: #333; }
.more { display: flex; align-items: center; gap: 6px; padding: 0 4px; color: #d4af37; }
.btn { display: inline-flex; align-items: center; height: 40px; padding: 0 24px; border-radius: 6px; font-weight: 500; }
.primary { background: #d4af37; color: #fff; }
.cta { margin: 0 20px 0 24px; }
.langs { position: relative; display: flex; align-items: center; gap: 8px; padding-left: 21px; font-size: 14px; font-weight: 500; color: #4b5563; }
.langs::before { content: ""; position: absolute; left: 0; width: 1px; height: 24px; background: #e5e7eb; }
.langs .gold { color: #d4af37; }
.sep { width: 2px; height: 20px; margin: 0 6px; background: #e5e7eb; }

.hero { margin-top: 12px; padding: 128px 0 80px; background: #f9f9f9; }
.hero h1 { font-size: 48px; line-height: 56px; margin-bottom: 16px; }
.hero p { font-size: 20px; line-height: 28px; color: #4b5563; }

.contact { display: grid; grid-template-columns: 1fr 2fr; gap: 64px; padding-top: 64px; padding-bottom: 64px; }
.contact h2 { font-size: 24px; line-height: 36px; margin-bottom: 20px; }
.contact h3 { font-size: 16px; line-height: 24px; }
.details { display: grid; gap: 24px; margin-bottom: 32px; }
.details li { display: flex; align-items: flex-start; gap: 16px; }
.details h3 { height: 24px; margin-bottom: 4px; }
.details p { color: #4b5563; }
.disc { display: grid; place-items: center; width: 34px; height: 34px; margin-top: 4px; border-radius: 50%; background: #d4af37; color: #fff; }
.social { display: flex; gap: 16px; margin-top: 16px; color: #4b5563; }
.card { padding: 32px 32px 28px; border-radius: 8px; background: #f9f9f9; box-shadow: 0 4px 6px -1px rgba(0, 0, 0, .1), 0 2px 4px -2px rgba(0, 0, 0, .1); }
.form { max-height: 480px; overflow: hidden; }
.fields { display: grid; grid-template-columns: 1fr 1fr; gap: 24px; }
.field { display: grid; gap: 8px; font-weight: 500; }
.wide { grid-column: 1 / -1; }
.field input, .field textarea { width: 100%; height: 42px; padding: 8px 16px; border: 1px solid #d1d5db; border-radius: 6px; background: transparent; }
.field textarea { height: 138px; resize: vertical; }
.submit { display: flex; justify-content: flex-end; padding-top: 30px; }

.locations { padding: 64px 0; background: #f9f9f9; }
.big { font-size: 30px; line-height: 40px; }
.finder { margin-top: 28px; padding: 48px 16px; }
.lead { max-width: 768px; margin: 12px 0 32px; color: #4b5563; }
.panel { display: grid; gap: 24px; padding: 24px; margin-bottom: 32px; border-radius: 8px; background: #fff; box-shadow: 0 4px 6px -1px rgba(0, 0, 0, .1), 0 2px 4px -2px rgba(0, 0, 0, .1); }
.row { display: flex; align-items: center; justify-content: space-between; }
.views { display: flex; gap: 16px; }
.view { display: flex; align-items: center; gap: 8px; height: 40px; padding: 0 16px; border-radius: 6px; background: #e5e7eb; }
.view.active { background: #d4af37; color: #fff; }
.search { position: relative; width: 256px; }
.search svg { position: absolute; left: 12px; top: 12px; color: #9ca3af; }
.search input { width: 100%; height: 42px; padding: 0 16px 0 40px; border: 1px solid #d1d5db; border-radius: 6px; background: #fff; }
.search input::placeholder { color: #8f949e; opacity: 1; }
.region { position: relative; }
.region select { display: block; appearance: none; width: 192px; height: 42px; padding: 0 16px; border: 1px solid #d1d5db; border-radius: 6px; background: #fff; box-shadow: 0 1px 3px rgba(0, 0, 0, .2); }
.region svg { position: absolute; right: 18px; top: 13px; pointer-events: none; }
.open { display: flex; align-items: center; gap: 8px; }
.open input { width: 20px; height: 20px; }

.map { position: relative; height: 600px; overflow: hidden; border-radius: 8px; background: #ddd; box-shadow: 0 4px 6px -1px rgba(0, 0, 0, .1), 0 2px 4px -2px rgba(0, 0, 0, .1); }
.tiles { width: 100%; height: 100%; }
.tiles text { font-family: "Noto Sans", sans-serif; text-anchor: middle; paint-order: stroke; stroke: rgba(255, 255, 255, .6); stroke-width: 2px; stroke-linejoin: round; }
.places { fill: #333; }
.refs { fill: #b01c32; font-size: 10px; font-style: italic; }
.nature { fill: #1b8a2b; font-size: 12px; font-style: italic; }
.hill { fill: #557a55; font-size: 12px; font-style: italic; }
.station { fill: #75517a; font-size: 10px; font-style: italic; }
.lake { fill: #4d80b3; font-size: 11px; font-style: italic; }
.shields text { fill: #6b3040; font-size: 11px; stroke: none; }
.marker { position: absolute; margin: -41px 0 0 -12px; }
.shade { filter: blur(1px); }
.zoomer { position: absolute; left: 10px; top: 10px; display: grid; border: 2px solid rgba(0, 0, 0, .2); border-radius: 4px; background-clip: padding-box; }
.zoomer button { width: 30px; height: 30px; background: #fff; color: #000; font: bold 22px/30px "DejaVu Sans Mono", monospace; }
.zoomer button:first-child { border-bottom: 1px solid #ccc; border-radius: 2px 2px 0 0; line-height: 28px; }
.credit { position: absolute; right: 0; bottom: 0; padding: 0 5px; background: rgba(255, 255, 255, .8); color: #333; font: 12px/17px "Liberation Sans", Arial, sans-serif; }
.credit a { color: #0078a8; }
.credit svg { display: inline; }

footer { padding: 64px 0 32px; background: #333; color: #fff; }
.cols { display: grid; grid-template-columns: repeat(4, 1fr); gap: 32px; padding-bottom: 48px; border-bottom: 1px solid #1f2937; }
footer h4 { font-size: 18px; line-height: 28px; margin-bottom: 16px; }
footer .follow { margin: 16px 0 8px; }
footer h5 { font-size: 16px; line-height: 24px; margin: 24px 0 8px; }
footer p, .links { color: #d1d5db; }
footer .social { margin-top: 0; color: #d1d5db; }
.links { display: grid; gap: 8px; }
.reach { display: grid; gap: 16px; }
.reach li { display: flex; align-items: center; gap: 12px; }
.reach svg { color: #d4af37; }
.reach .address { align-items: flex-start; }
.address svg { margin-top: 4px; }
.legal { display: flex; justify-content: space-between; padding-top: 32px; font-size: 14px; line-height: 20px; color: #9ca3af; }
.legal nav { display: flex; gap: 24px; }

.to-top { position: fixed; right: 30px; bottom: 30px; display: grid; place-items: center; width: 45px; height: 45px; border-radius: 50%; background: #d4af37; color: #fff; opacity: .7; box-shadow: 0 4px 10px rgba(0, 0, 0, .2); }
</style>
